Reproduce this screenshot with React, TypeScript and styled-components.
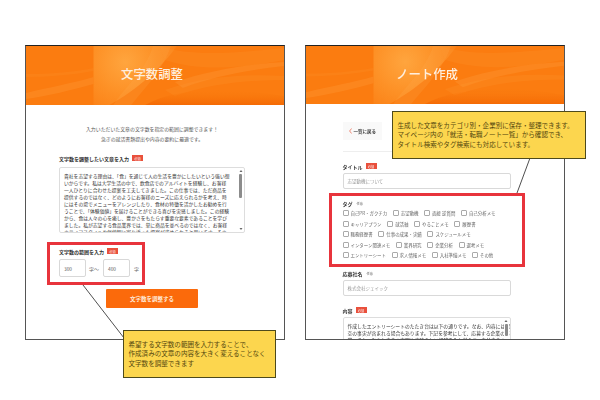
import React from "react";
import styled, { createGlobalStyle } from "styled-components";

const Global = createGlobalStyle`
  html, body { margin: 0; padding: 0; background: #fff; }
  body { font-family: "Noto Sans CJK JP", "Noto Sans", sans-serif; }
  * { box-sizing: border-box; }
`;

const Page = styled.div`
  position: relative;
  width: 600px;
  height: 400px;
  overflow: hidden;
  display: flex;
  gap: 19.5px;
  padding: 45px 0 0 25px;
  filter: blur(0.35px);
`;

const Panel = styled.section`
  width: 260px;
  height: 295px;
  flex: none;
  overflow: hidden;
  background: #fff;
  border: 1px solid #555;
  border-top-color: #222;
`;

const Header = styled.header<{ $height: number; $shift: number }>`
  position: relative;
  height: ${(p) => p.$height}px;
  display: flex;
  align-items: center;
  justify-content: center;
  padding-right: ${(p) => p.$shift}px;
  background: #fb7a10;
  overflow: hidden;
`;

const HeaderSvg = styled.svg`
  position: absolute;
  inset: 0;
  width: 100%;
  height: 100%;
`;

const Title = styled.h1`
  position: relative;
  margin: 0 0 3px;
  font-size: 12.4px;
  line-height: 16px;
  font-weight: 500;
  color: #ffeedd;
`;

const Body = styled.div<{ $left: number; $width: number }>`
  padding-left: ${(p) => p.$left}px;
  width: ${(p) => p.$left + p.$width}px;
`;

const Intro = styled.p`
  margin: 0;
  padding-top: 19px;
  text-align: center;
  font-size: 4.9px;
  line-height: 9.5px;
  color: #555;
`;

const Label = styled.div<{ $top: number }>`
  display: flex;
  align-items: center;
  gap: 3px;
  height: 8px;
  margin-top: ${(p) => p.$top}px;
  font-size: 5px;
  font-weight: 700;
  color: #333;
`;

const Required = styled.span`
  width: 11px;
  height: 6.5px;
  display: flex;
  align-items: center;
  justify-content: center;
  background: #e9503c;
  color: #fff;
  font-size: 3.2px;
  font-weight: 400;
`;

const Optional = styled.span`
  font-size: 3.2px;
  font-weight: 400;
  color: #777;
  margin-left: 1px;
`;

const TextBox = styled.div<{ $height: number; $top: number }>`
  position: relative;
  margin-top: ${(p) => p.$top}px;
  height: ${(p) => p.$height}px;
  padding: 4px 4px 0;
  overflow: hidden;
  border: 1px solid #ddd;
  border-radius: 2px;
  background: #fff;
  font-size: 4.8px;
  line-height: 7px;
  color: #333;
`;

const TextLine = styled.div`
  white-space: nowrap;
`;

const Rail = styled.div`
  position: absolute;
  top: 1px;
  right: 1px;
  bottom: 1px;
  width: 5px;
  background: #fff;
  display: flex;
  flex-direction: column;
  align-items: center;
`;

const RailArrow = styled.svg`
  width: 4px;
  height: 4px;
  flex: none;
`;

const RailThumb = styled.div<{ $height: number }>`
  width: 3px;
  height: ${(p) => p.$height}px;
  margin-top: 1px;
  border-radius: 1px;
  background: #8c8c8c;
`;

const RailGap = styled.div`
  flex: 1;
`;

const RangeRow = styled.div`
  display: flex;
  align-items: center;
  margin-top: 4px;
  font-size: 5px;
  color: #666;
`;

const NumberBox = styled.div`
  width: 27px;
  height: 18px;
  display: flex;
  align-items: center;
  padding-left: 4px;
  border: 1px solid #d8d8d8;
  border-radius: 2px;
  font-size: 4.8px;
  color: #555;
`;

const RangeUnit = styled.span<{ $width: number; $indent: number }>`
  width: ${(p) => p.$width}px;
  padding-left: ${(p) => p.$indent}px;
  white-space: nowrap;
`;

const Submit = styled.button`
  display: block;
  width: 92px;
  height: 19px;
  margin: 12px auto 0;
  padding: 0;
  border: 0;
  border-radius: 1px;
  background: #fb6a0b;
  color: #ffe9d8;
  font-family: inherit;
  font-size: 5.5px;
  font-weight: 700;
`;

const BackButton = styled.div`
  margin-top: 18px;
  width: 39px;
  height: 18px;
  display: flex;
  align-items: center;
  gap: 2px;
  padding-left: 6px;
  background: #f9f9f9;
  font-size: 4.5px;
  font-weight: 700;
  color: #444;
  white-space: nowrap;
`;

const BackChevron = styled.svg`
  width: 3px;
  height: 6px;
  flex: none;
`;

const Rule = styled.hr`
  margin: 11px 0 0;
  border: 0;
  border-top: 1px solid #eee;
`;

const FieldInput = styled.div`
  height: 16px;
  margin-top: 3px;
  display: flex;
  align-items: center;
  padding-left: 4px;
  border: 1px solid #d9d9d9;
  border-radius: 2px;
  font-size: 4.5px;
  color: #999;
`;

const TagGrid = styled.div`
  display: flex;
  flex-direction: column;
  gap: 4px;
  margin-top: 3px;
`;

const TagRow = styled.div`
  display: flex;
  gap: 5.6px;
  height: 6.5px;
`;

const Tag = styled.label`
  display: flex;
  align-items: center;
  gap: 2px;
  font-size: 4.45px;
  color: #666;
  white-space: nowrap;
`;

const Check = styled.span`
  width: 6px;
  height: 6px;
  flex: none;
  border: 1px solid #aaa;
  border-radius: 1px;
`;

const Highlight = styled.div<{ $x: number; $y: number; $w: number; $h: number }>`
  position: absolute;
  left: ${(p) => p.$x}px;
  top: ${(p) => p.$y}px;
  width: ${(p) => p.$w}px;
  height: ${(p) => p.$h}px;
  border: 3px solid #e8343c;
`;

const Leaders = styled.svg`
  position: absolute;
  inset: 0;
  width: 600px;
  height: 400px;
`;

const Callout = styled.div<{ $x: number; $y: number; $w: number; $h: number }>`
  position: absolute;
  left: ${(p) => p.$x}px;
  top: ${(p) => p.$y}px;
  width: ${(p) => p.$w}px;
  height: ${(p) => p.$h}px;
  display: flex;
  flex-direction: column;
  justify-content: center;
  padding-left: 4.5px;
  background: #fcd64e;
  border: 1px solid #4d4a1c;
  font-size: 6.55px;
  line-height: 9.2px;
  color: #55480f;
  white-space: nowrap;
`;

const essay = [
  "貴社を志望する理由は、「食」を通じて人の生活を豊かにしたいという強い想",
  "いからです。私は大学生活の中で、飲食店でのアルバイトを経験し、お客様",
  "一人ひとりに合わせた提案を工夫してきました。この仕事では、ただ商品を",
  "提供するのではなく、どのようにお客様のニーズに応えられるかを考え、時",
  "にはその場でメニューをアレンジしたり、食材の特徴を活かしたお勧めを行",
  "うことで、「体験価値」を届けることができる喜びを実感しました。この経験",
  "から、食は人々の心を癒し、豊かさをもたらす重要な要素であることを学び",
  "ました。私が志望する食品業界では、単に商品を並べるのではなく、お客様",
  "のライフスタイルや価値観に寄り添った提案が求められると思います。その",
];

const note = [
  "作成したエントリーシートのたたき台は以下の通りです。なお、内容には架",
  "空の事実が含まれる場合もあります。下記を参考にして、応募する企業の事",
  "業、また、あなた自身の実習や素晴らしい経験を入れ替えて、自分自身のエントリーシ",
];

const tags = [
  ["自己PR・ガクチカ", "志望動機", "面接 逆質問", "自己分析メモ"],
  ["キャリアプラン", "就活軸", "やることメモ", "履歴書"],
  ["職務経歴書", "仕事の成果・実績", "スケジュールメモ"],
  ["インターン関連メモ", "業界研究", "企業分析", "選考メモ"],
  ["エントリーシート", "求人情報メモ", "入社準備メモ", "その他"],
];

function HeaderArt({ id }: { id: string }) {
  return (
    <HeaderSvg viewBox="0 0 260 59" preserveAspectRatio="none" aria-hidden="true">
      <defs>
        <radialGradient id={`${id}-glow`} cx="100" cy="16" r="60" gradientUnits="userSpaceOnUse">
          <stop offset="0" stopColor="#ffa53e" />
          <stop offset="0.55" stopColor="#fd9025" />
          <stop offset="1" stopColor="#fb7f14" />
        </radialGradient>
        <linearGradient id={`${id}-low`} x1="0" y1="0" x2="0" y2="1">
          <stop offset="0" stopColor="#f97a0c" stopOpacity="0" />
          <stop offset="1" stopColor="#f46a05" />
        </linearGradient>
      </defs>
      <rect width="260" height="59" fill="#fb7c10" />
      <path d="M0 47 C25 41 48 37 68 31 L68 38 C46 44 22 50 0 53 Z" fill="#ff9a3a" opacity="0.32" />
      <path d="M0 28 C24 28 48 26 68 22 L68 25 C46 29 22 31 0 31 Z" fill="#ff9a3a" opacity="0.16" />
      <path d="M68 0 H152 C138 20 112 44 84 59 H68 Z" fill={`url(#${id}-glow)`} />
      <path d="M88 59 C102 38 120 26 128 0 H146 C138 24 118 44 106 59 Z" fill="#ffb45c" opacity="0.16" />
      <path d="M135 0 C165 10 200 8 260 2 V14 C210 24 170 24 140 14 Z" fill="#ff9c36" opacity="0.2" />
      <path d="M150 36 C185 24 225 18 260 16 V20 C225 24 190 30 158 42 Z" fill="#ffa94d" opacity="0.24" />
      <path d="M140 44 C180 30 220 28 260 30 V34 C220 34 185 38 150 50 Z" fill="#ff9a36" opacity="0.2" />
      <path d="M120 59 C150 42 200 40 260 50 V59 Z" fill={`url(#${id}-low)`} />
    </HeaderSvg>
  );
}

function ScrollRail({ thumb }: { thumb: number }) {
  return (
    <Rail>
      <RailArrow viewBox="0 0 4 4">
        <path d="M2 1 L3.5 3 H0.5 Z" fill="#666" />
      </RailArrow>
      <RailThumb $height={thumb} />
      <RailGap />
      <RailArrow viewBox="0 0 4 4">
        <path d="M2 3 L3.5 1 H0.5 Z" fill="#666" />
      </RailArrow>
    </Rail>
  );
}

export default function App() {
  return (
    <>
      <Global />
      <Page>
        <Panel>
          <Header $height={59} $shift={6}>
            <HeaderArt id="a" />
            <Title>文字数調整</Title>
          </Header>
          <Body $left={33} $width={186}>
            <Intro>
              入力いただいた文章の文字数を指定の範囲に調整できます！
              <br />
              急ぎの就活書類提出や内容の要約に最適です。
            </Intro>
            <Label $top={11}>
              文字数を調整したい文章を入力<Required>必須</Required>
            </Label>
            <TextBox $height={66} $top={5}>
              {essay.map((line) => (
                <TextLine key={line}>{line}</TextLine>
              ))}
              <ScrollRail thumb={24} />
            </TextBox>
            <Label $top={14}>
              文字数の範囲を入力<Required>必須</Required>
            </Label>
            <RangeRow>
              <NumberBox>300</NumberBox>
              <RangeUnit $width={17} $indent={3}>字〜</RangeUnit>
              <NumberBox>400</NumberBox>
              <RangeUnit $width={10} $indent={4}>字</RangeUnit>
            </RangeRow>
            <Submit>文字数を調整する</Submit>
          </Body>
        </Panel>
        <Panel>
          <Header $height={58} $shift={15}>
            <HeaderArt id="b" />
            <Title>ノート作成</Title>
          </Header>
          <Body $left={37} $width={168}>
            <BackButton>
              <BackChevron viewBox="0 0 3 6">
                <path d="M2.6 0.5 L0.6 3 L2.6 5.5" fill="none" stroke="#e8573c" strokeWidth="0.7" />
              </BackChevron>
              一覧に戻る
            </BackButton>
            <Rule />
            <Label $top={10}>
              タイトル<Required>必須</Required>
            </Label>
            <FieldInput>志望動機について</FieldInput>
            <Label $top={10}>
              タグ<Optional>任意</Optional>
            </Label>
            <TagGrid>
              {tags.map((row) => (
                <TagRow key={row[0]}>
                  {row.map((tag) => (
                    <Tag key={tag}>
                      <Check />
                      {tag}
                    </Tag>
                  ))}
                </TagRow>
              ))}
            </TagGrid>
            <Label $top={10.5}>
              応募社名<Optional>任意</Optional>
            </Label>
            <FieldInput>株式会社ジェイック</FieldInput>
            <Label $top={10}>
              内容<Required>必須</Required>
            </Label>
            <TextBox $height={40} $top={3}>
              {note.map((line) => (
                <TextLine key={line}>{line}</TextLine>
              ))}
              <ScrollRail thumb={12} />
            </TextBox>
          </Body>
        </Panel>
        <Highlight $x={47} $y={242} $w={98} $h={43} />
        <Highlight $x={329} $y={193} $w={196} $h={74} />
        <Leaders viewBox="0 0 600 400" aria-hidden="true">
          <path d="M83 285 L124 338" stroke="#222" strokeWidth="0.8" fill="none" />
          <path d="M530 158 L517 193" stroke="#222" strokeWidth="0.8" fill="none" />
        </Leaders>
        <Callout $x={123} $y={330} $w={153} $h={48}>
          <div>希望する文字数の範囲を入力することで、</div>
          <div>作成済みの文章の内容を大きく変えることなく</div>
          <div>文字数を調整できます</div>
        </Callout>
        <Callout $x={392} $y={111} $w={194} $h={48}>
          <div>生成した文章をカテゴリ別・企業別に保存・整理できます。</div>
          <div>マイページ内の「就活・転職ノート一覧」から確認でき、</div>
          <div>タイトル検索やタグ検索にも対応しています。</div>
        </Callout>
      </Page>
    </>
  );
}
